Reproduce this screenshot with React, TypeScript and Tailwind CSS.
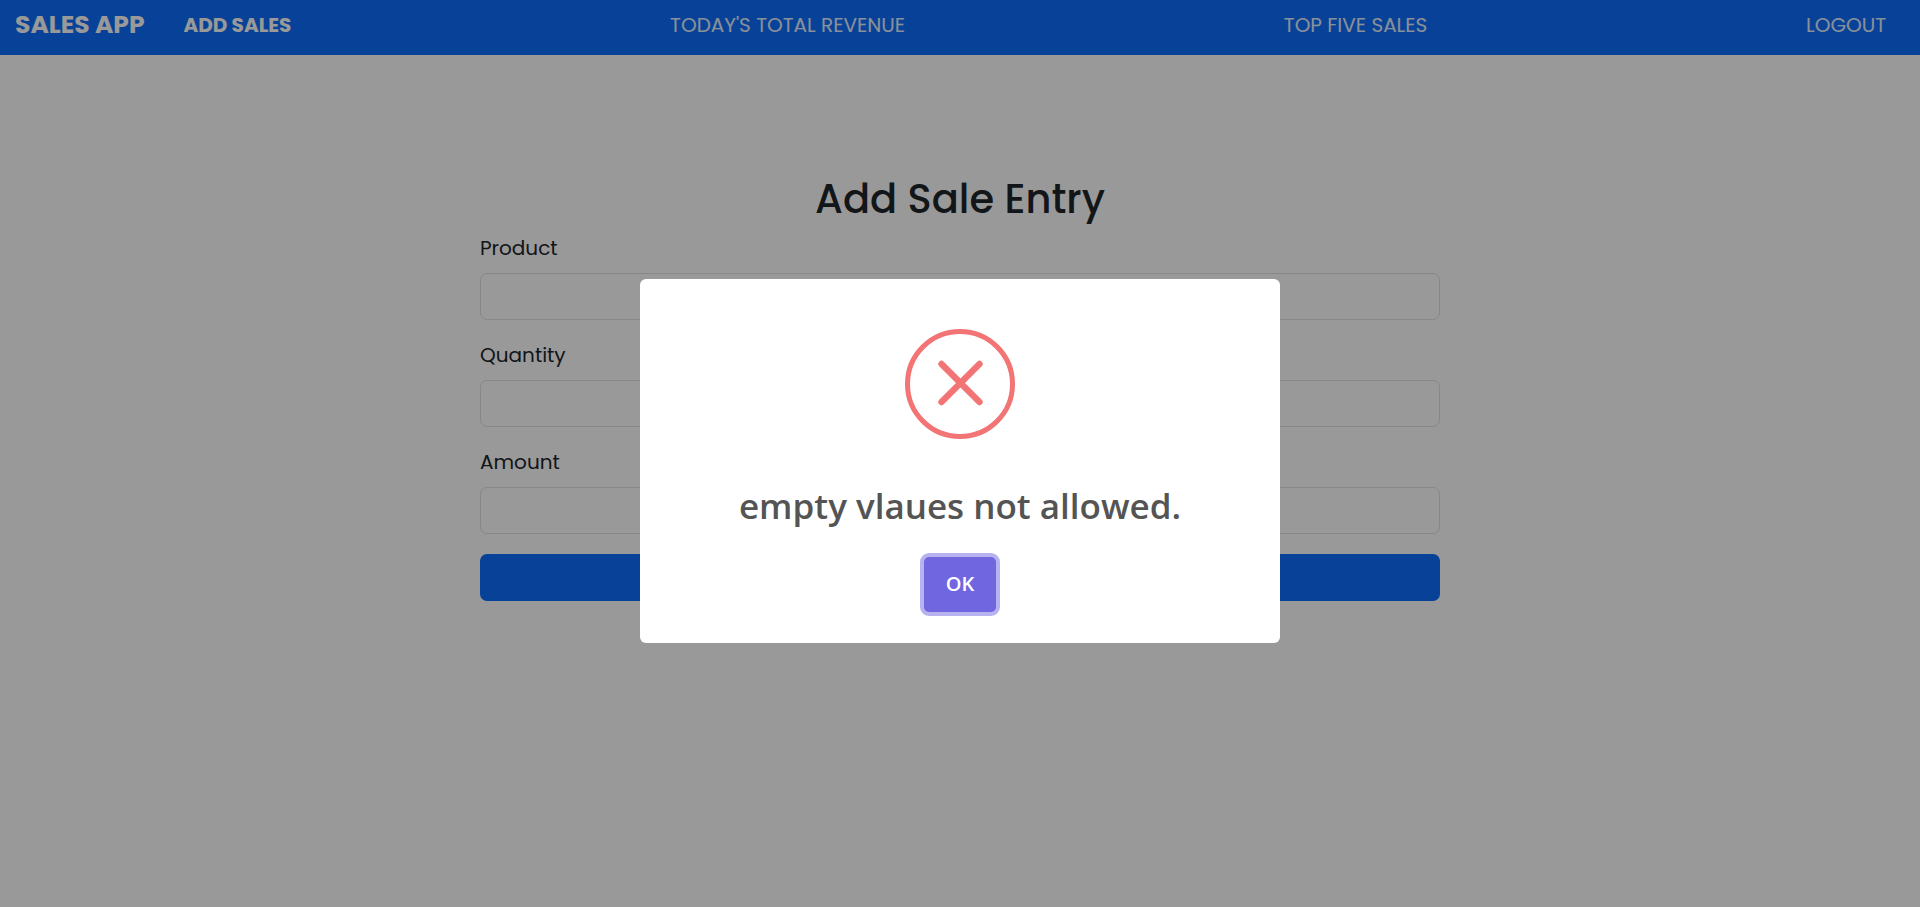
import { useState } from "react";

const links = ["ADD SALES", "TODAY'S TOTAL REVENUE", "TOP FIVE SALES", "LOGOUT"];
const fields = ["Product", "Quantity", "Amount"];

function NavBar() {
  return (
    <nav className="flex items-center bg-[#0d6efd] pt-[5px] pr-[34px] pb-[11px] pl-[15px] text-white">
      <a href="#" className="mr-[39px] text-[25px] leading-[39px] font-bold">
        SALES APP
      </a>
      <ul className="flex grow items-center justify-between text-[20px] leading-[30px]">
        {links.map((link, i) => (
          <li key={link}>
            <a href="#" className={i === 0 ? "font-bold" : "text-white/90"}>
              {link}
            </a>
          </li>
        ))}
      </ul>
    </nav>
  );
}

function SaleForm() {
  return (
    <form className="mx-auto mt-[120px] w-1/2 text-[#212529]">
      <h1 id="form-title" className="mb-[10px] text-center text-[40px] leading-[48px] font-medium">
        Add Sale Entry
      </h1>
      {fields.map((field) => (
        <div key={field} className="mb-5">
          <label htmlFor={field} className="mb-[10px] block text-[20px] leading-[30px]">
            {field}
          </label>
          <input
            id={field}
            type="text"
            className="block h-[47px] w-full rounded-[7px] border border-[#dee2e6] bg-white px-4 text-[20px]"
          />
        </div>
      ))}
      <button
        type="button"
        aria-labelledby="form-title"
        className="block h-[47px] w-full rounded-[7px] bg-[#0d6efd]"
      />
    </form>
  );
}

function ErrorDialog({ onClose }: { onClose: () => void }) {
  return (
    <div className="fixed inset-0 flex items-center justify-center bg-black/40 pt-[14px]">
      <div
        role="alertdialog"
        aria-labelledby="error-title"
        className="flex w-1/3 flex-col items-center rounded-[6px] bg-white pt-[50px] pb-[31px] font-['Segoe_UI','Open_Sans','Noto_Sans',sans-serif]"
      >
        <svg width="110" height="110" viewBox="0 0 110 110" fill="none" stroke="#f27474" aria-hidden="true">
          <circle cx="55" cy="55" r="52.5" strokeWidth="5" />
          <path d="M36.5 35l38 38M74.5 35l-38 38" strokeWidth="6.4" strokeLinecap="round" />
        </svg>
        <h2
          id="error-title"
          className="mt-[37px] mb-[21px] text-center text-[35px] leading-[60px] font-semibold text-[#545454]"
        >
          empty vlaues not allowed.
        </h2>
        <button
          type="button"
          onClick={onClose}
          className="h-[55px] w-[72px] rounded-[5px] bg-[#7066e0] text-[20px] font-semibold text-white ring-4 ring-[#b8b3f0]"
        >
          OK
        </button>
      </div>
    </div>
  );
}

export default function App() {
  const [open, setOpen] = useState(true);
  return (
    <div className="min-h-screen bg-white font-['Poppins','Inter',sans-serif]">
      <NavBar />
      <SaleForm />
      {open && <ErrorDialog onClose={() => setOpen(false)} />}
    </div>
  );
}
